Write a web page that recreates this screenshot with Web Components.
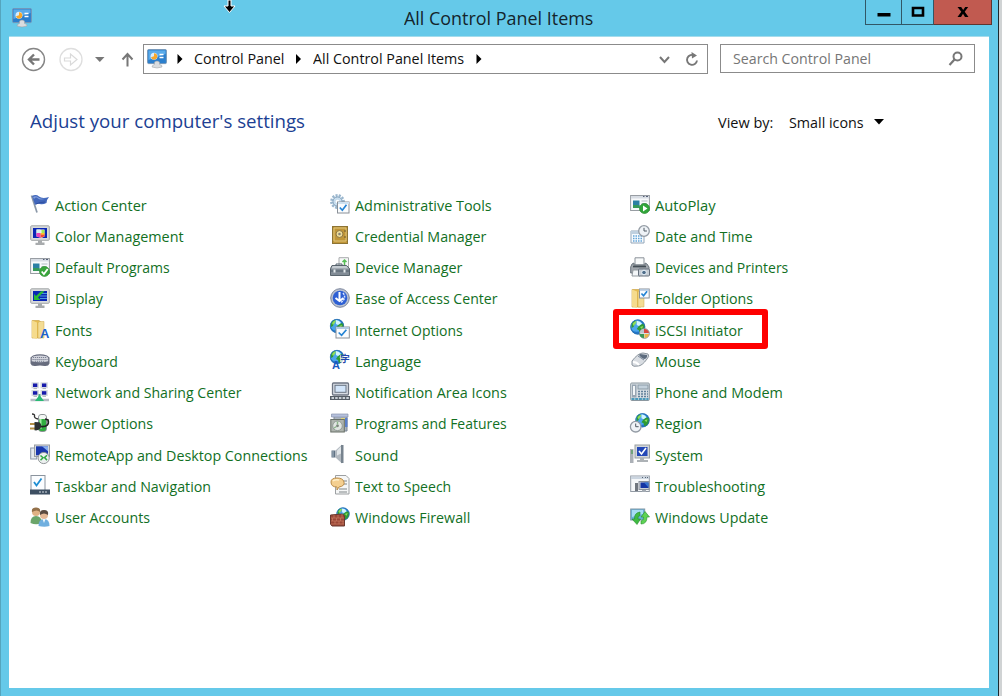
<!DOCTYPE html>
<html lang="en">
<head>
<meta charset="utf-8">
<title>All Control Panel Items</title>
<style>
html,body{margin:0;height:100%;overflow:hidden;background:#d0d3d4;font-family:"Open Sans","Noto Sans",sans-serif;color:#111}
</style>
</head>
<body>
<control-window></control-window>
<script>
// Shared drawing pieces for the 20x20 icon set.
const globe=(x,y,r)=>`<g transform="translate(${x} ${y}) scale(${r/7})"><circle r="7" fill="#2377c9"/><circle cx="-1" cy="-1" r="5.6" fill="#4ba6ec"/><path d="M-6-2Q-5-6-2-6L-3-3-4 0-6 1ZM1-1 4-3 6.600-2Q7 3 4 5.500L2 6 1 3-1 2Z" fill="#2f9b35"/><path d="M-5-3Q-3-6-1-5.600L-2-3-4-1ZM2 0 5-1 4 2Z" fill="#8fdc5c"/><path d="M-1-6 2-5 4-3 1-1-1-2Z" fill="#d3f6ff"/><circle r="6.700" fill="none" stroke="#2a6fab" stroke-width=".7"/></g>`;
const paper=(x,y,w,h)=>`<rect x="${x}" y="${y}" width="${w}" height="${h}" fill="#fafcfe" stroke="#8a9097"/><path d="M${x+w*.2} ${y+h*.5}l${w*.22} ${h*.25} ${w*.36} ${-h*.5}" fill="none" stroke="#2584d4" stroke-width="1.700"/>`;
const monitor=(inner)=>`<rect x=".7" y=".8" width="18.600" height="14.500" rx="1" fill="#d8dadb" stroke="#a2a5a7"/><rect x="3" y="3" width="14" height="10" fill="#0925b5"/>${inner}<path d="M8 15.500h4v2h2.500V20h-9v-2.300H8Z" fill="#a8abad"/>`;
const app=`<rect x=".6" y="1.500" width="18.800" height="15" fill="#f8fafb" stroke="#989da3"/><path d="M1 2h18v2.500H1Z" fill="#d8dde4"/><path d="M13 2.500h1.500M16 2.500h2" stroke="#566078"/><rect x="3" y="6.500" width="6.500" height="7.500" fill="#2b80a4"/><path d="M3 11h6.500v3H3Z" fill="#35995a"/><path d="M11.500 7h6M11.500 9.500h5M11.500 12h4" stroke="#b3bcc5"/>`;
const folder=`<path d="M2 1.500h7l2 1.500v16H2Z" fill="#e5bc51" stroke="#c69c3a" stroke-width=".6"/><path d="M2 1.500 7 3.500V20l-5-1.500Z" fill="#f5db8d"/><path d="M9 2.500h5V19H8V4Z" fill="#f3dc94" stroke="#cfa94f" stroke-width=".5"/>`;
const clock=(x,y,r)=>`<circle cx="${x}" cy="${y}" r="${r}" fill="#eff3f7" stroke="#939ba4" stroke-width="1.300"/><path d="M${x} ${y-r*.6}V${y}h${r*.55}" fill="none" stroke="#4e5862"/>`;
const cpanel=`<rect x=".6" y=".6" width="18.800" height="14" rx="1" fill="#2b7fcd" stroke="#7597b8"/><path d="M1.500 1.500h17V5l-17 6Z" fill="#5aabea"/><circle cx="7" cy="7.300" r="3.500" fill="#d9edfb"/><path d="M7 7.300V4.200a3.200 3.200 0 1 1-3 4.100Z" fill="#f7a72b"/><path d="M12.500 5.500h4M12.500 8.500h4" stroke="#fff" stroke-width="1.400"/><path d="M7.500 13q2.500-2 5 0v2.500q3 .5 2.500 2.500-5 2-10 0 0-2 2.500-2.500Z" fill="#d9dcdf" stroke="#999da1" stroke-width=".5"/>`;
const ICONS={
cpanel,
flag:`<path d="M1.500 1.500 7 18.500" stroke="#8b98a8" stroke-width="1.700"/><path d="M2 2q4-2 7 .5t10 .5q-2 2-2.500 6-4 2-6.500 1T5 11Z" fill="#4267bb"/><path d="M3 3q3-1.500 5.500.5T16 4.500q-6 2-8 0T4 5Z" fill="#829fdc"/><path d="M6 10q4-2 9-2" stroke="#2e4e9f" fill="none"/>`,
color:monitor(`<path d="M6.500 4.500h8v7l-3 1.500-5-1.500Z" fill="#f6f6e4"/><path d="M6.500 4.500h4v4h-4Z" fill="#d6eff0"/><path d="M6.500 8h4v4.800l-4-1.300Z" fill="#e943b9"/><path d="M10.500 8.500h4v3l-4 1.300Z" fill="#f04a3a"/><path d="M11.500 5h3v3l-3 1Z" fill="#a5ea52"/><path d="M11 8h3.500v1.700H11Z" fill="#ffc02b"/>`),
defaults:app+`<circle cx="14.500" cy="14.500" r="5" fill="#39a63c" stroke="#248827" stroke-width=".6"/><path d="m11.700 14.500 2.200 2.500 3.800-5" fill="none" stroke="#fff" stroke-width="1.800"/>`,
display:monitor(`<path d="M10 5.500h7M10 8h7M10 10.500h7" stroke="#4a9bdb"/><path d="M14.500 3.300 8 9.500l2.500 2.500H4V6l2 2 5-4.700Z" fill="#2bbb35"/>`),
fonts:folder+`<text x="10" y="19" font-family="Liberation Sans,sans-serif" font-size="13" font-weight="700" fill="#1b63cf">A</text>`,
keyboard:`<path d="M3 5.500Q10 3 17 5.500l2.500 2v6q-1 3-5 2.500-4.500-.8-9 0-4 .5-5-2.500v-6Z" fill="#676c7e"/><path d="M3.500 6.300q6.500-1.800 13 0l1.700 1.500v3.500q-8 2-16.500 0V7.800Z" fill="#d3d5dd"/><path d="M3 7.500h14M2.500 9.500h15M5 11.300h10" stroke="#7b8193" stroke-width="1" stroke-dasharray="1.200 .8"/>`,
network:`${[[1.500,.3],[10.500,.3],[1.500,8],[10.500,8]].map(([x,y])=>`<rect x="${x}" y="${y}" width="7.300" height="6" fill="#d5d9df"/><rect x="${x+1.500}" y="${y+1.200}" width="4.300" height="3.500" fill="#171bac"/><path d="M${x+2} ${y+6.300}h3.500" stroke="#a9aeb5"/>`).join('')}<path d="M9.500 12v5" stroke="#55aa88" stroke-width="2"/><path d="M.5 18H19" stroke="#b4bcc4" stroke-width="2.500"/><path d="m9.500 13 4.500 6H5Z" fill="#28ba74"/>`,
power:`<rect x="8" y="1" width="9" height="18" rx="4" fill="#8b9194"/><rect x="9" y="2" width="7" height="5" rx="2" fill="#f3f7f4"/><rect x="9" y="6" width="7" height="12" rx="2" fill="#31ad40"/><path d="M10.500 6v10" stroke="#a3eda2" stroke-width="2"/><path d="M2 1q3 0 2.500 2T8 6" fill="none" stroke="#333" stroke-width="1.400"/><path d="M0 11h5M0 15.500h5" stroke="#b49147" stroke-width="1.800"/><path d="m4.500 9 5 .3q3 2.700 1 6-2 2.700-6 2Z" fill="#2d3131"/><path d="M11 13.500q9 .5 7-6.500l-3-1" fill="none" stroke="#222" stroke-width="1.700"/>`,
remote:`<rect x=".7" y="4" width="6" height="11" fill="#e5ebf0" stroke="#8b98aa"/><rect x="4.500" y="1" width="15" height="11.500" fill="#d6dbe0" stroke="#979ca1"/><rect x="6" y="2.300" width="12" height="9" fill="#1937ac"/><path d="M12 2.300h6v5Z" fill="#88aff0"/><circle cx="13.700" cy="14" r="5.600" fill="#edf0f0" stroke="#929899"/><path d="m10.500 11.500 2.500 2.300-2.500 2.500M17 11.300l-2.500 2.300 2.500 2.500" fill="none" stroke="#32a846" stroke-width="1.500"/>`,
taskbar:`<rect x="1" y=".5" width="14" height="15" fill="#fbfdff" stroke="#8b949e"/><path d="m4 7 2.500 3.500 5-7" fill="none" stroke="#1e8ed2" stroke-width="1.800"/><rect y="14.500" width="20" height="5" fill="#3d4f62"/><path d="M9 17h2m1 0h2m1 0h2" stroke="#a3adb8" stroke-width="1.500"/>`,
users:`<circle cx="6" cy="5" r="4" fill="#e0b284"/><path d="M2 5Q1 .5 6 .5T10 5Q7 2 2 5" fill="#94714a"/><path d="M.5 16q0-7 5.500-7t6 7q-6 2.500-11.500 0" fill="#6ba56a"/><circle cx="14" cy="8" r="4" fill="#e5b996"/><path d="M10 8Q9 3 14 3t4 5q-4-3-8 0" fill="#5b4b40"/><path d="M8.500 19q0-7 5.500-7t5.500 7q-5 1.500-11 0" fill="#70afdf"/><path d="m12.500 12 1.500 4 1.500-4" fill="#eef7fd"/>`,
admin:`<circle cx="7.500" cy="7.500" r="6" fill="#e2eef8" stroke="#9ab6cd" stroke-width="2.800" stroke-dasharray="2 1.200"/><circle cx="7.500" cy="7.500" r="4.500" fill="#c9deee" stroke="#8aa7c0"/><circle cx="7.500" cy="7.500" r="1.800" fill="#fff"/>`+paper(7.5,8,11.5,11)+`<path d="M8 9h11" stroke="#cfe2f1" stroke-width="2"/>`,
credential:`<rect x="2.500" y="1.500" width="15" height="17" fill="#c09638" stroke="#8d7434"/><path d="M4 3h12v13H4Z" fill="none" stroke="#dfc57c"/><circle cx="9.500" cy="9" r="3.500" fill="#ecdc9a" stroke="#8e7742"/><circle cx="9.500" cy="9" r="1.300" fill="#85837a"/><path d="M15 5v2m0 4v2" stroke="#6b582d"/>`,
device:`<path d="M9 .7h9.500V11H9Z" fill="#f7f8f8" stroke="#a8abad"/><path d="M14.500 2.500v6M12.500 5l2-2 2 2" stroke="#58be58" fill="none" stroke-width="1.500"/><path d="M2 8.500h14.500l3 3v7H.5v-7Z" fill="#818b95" stroke="#59646d"/><path d="M2.500 9h14l2 2.500H1.500Z" fill="#c5ccd2"/><path d="M6 9V7h6v2M1 14h18" fill="none" stroke="#52606c"/><path d="M4.500 12.500v3m10-3v3" stroke="#e6ebee" stroke-width="2"/>`,
ease:`<circle cx="10" cy="10" r="9.300" fill="#b9c1d0" stroke="#7d879d"/><circle cx="10" cy="10" r="7.300" fill="#2e60d4"/><path d="M9.500 4v8m-4-2 4 3 4-3" fill="none" stroke="#fff" stroke-width="2"/><path d="M13 5q4 5-2 9.500" fill="none" stroke="#d9e5ff" stroke-width="1.500" stroke-dasharray="2 1"/>`,
internet:globe(7,7,7)+paper(6,8,13.3,11)+`<path d="M6 9h13" stroke="#b3cbe3" stroke-width="2"/>`,
language:globe(7,7,7)+`<path d="M10 5h9v7h-9Z" fill="#fff" opacity=".7"/><text x="10.300" y="12" font-family="Noto Sans CJK JP,sans-serif" font-size="9.500" font-weight="700" fill="#2348ad">字</text><text x="2" y="18.800" font-family="Liberation Sans,sans-serif" font-size="11" font-weight="700" fill="#1959c2">A</text>`,
notify:`<rect x="2.500" y="1" width="16" height="12" rx="1" fill="#d8dde5" stroke="#6e7684" stroke-width="1.300"/><rect x="5" y="3.300" width="11" height="7" fill="#d2e5fa" stroke="#697483"/><rect y="14" width="20" height="4" fill="#545c66"/><path d="M1.500 16h18" stroke="#c8cfd6" stroke-width="2" stroke-dasharray="2.500 1.200"/>`,
programs:`<path d="M4 3h13v15H4Z" fill="#aab3bd" stroke="#7a8592"/><path d="M1.500 1h16.500v3H1.500Z" fill="#b5c0dc" stroke="#8792ac" stroke-width=".7"/><path d="M14 5h3.500v9H14Z" fill="#5a7fc9"/><path d="M11 5h4v9h-4Z" fill="#e0d47a"/><rect x=".8" y="6.500" width="13.500" height="12.500" fill="#aeb4ae" stroke="#687068"/><circle cx="7.500" cy="12.800" r="4.800" fill="#e0e5e1" stroke="#929a96"/><path d="M7.500 8.500v3M4 15l2.500-1.500" stroke="#8ab888" stroke-width="1.400"/><circle cx="7.500" cy="12.800" r="1.400" fill="#7c857e"/>`,
sound:`<path d="M1.500 6.500h4v7h-4Z" fill="#607284"/><path d="M5.500 6.500 12 .5v19l-6.500-6Z" fill="#b2b9c0"/><path d="M11 1h2.500v18H11Z" fill="#77838e"/><path d="m7 6.500 4-4v7l-4 2Z" fill="#e1e6e9"/><path d="M3 7v6" stroke="#a9b8c5"/>`,
speech:`<path d="M5.500.5H16l3 3V19H5.500Z" fill="#f6f7f7" stroke="#9da0a2"/><path d="M13 6h4M14 9h3M9 14h8m-8 3h8" stroke="#7e8587"/><path d="M1 7q0-4 6-4t7 4-5 5L7 15v-3Q1 12 1 7" fill="#f4cf90" stroke="#ba8c48"/><path d="M3 6q2-2 6-1" fill="none" stroke="#fff0cb" stroke-width="1.500"/>`,
firewall:globe(13,7,6.5)+`<path d="m.5 8 12-1 2 2v10H2l-1.500-2Z" fill="#9b4737" stroke="#69382e"/><path d="M1 11h13M1 14h13M1 17h13M4 8v3m4-3v3m4-4v4M2.500 11v3m4-3v3m4-3v3M5 14v3m4-3v3m4-3v3" stroke="#c77b63" stroke-width=".7"/>`,
autoplay:app+`<circle cx="14.500" cy="14.500" r="5" fill="#31a63a" stroke="#23862a" stroke-width=".7"/><path d="m13 11.500 4.500 3-4.500 3Z" fill="#fff"/>`,
date:`<path d="M1 6h13v12H1Z" fill="#f7fbff" stroke="#94a6b8"/><path d="M1 6h13v3H1Z" fill="#bfd0df"/><path d="M3 11h9M3 13.500h9M3 16h9" stroke="#64a5d7" stroke-width="1.300" stroke-dasharray="1.500 1"/>`+clock(14,6,5.3),
printer:`<path d="M5 .8h9V8H5Z" fill="#f8fafa" stroke="#8b9299"/><path d="m2 7 2-1v2h11V6l2 1 2 3v6H.7v-6Z" fill="#a0a6ac" stroke="#6c767e"/><path d="M3 9.500h13" stroke="#434d55" stroke-width="1.700"/><path d="M3 13h8l-1 6H2Z" fill="#f4f7f9" stroke="#92999e"/><rect x="8.500" y="12" width="11" height="7" rx="1" fill="#c5ccd4" stroke="#66707c"/><circle cx="14" cy="15.500" r="2.300" fill="#4f6e8b" stroke="#edf5fb"/>`,
folderopt:folder+paper(9.5,1,9.7,9)+`<path d="M9.500 2h9.500" stroke="#afc6de" stroke-width="1.500"/>`,
iscsi:globe(7.8,8,7.4)+`<circle cx="14.500" cy="14.500" r="4.800" fill="#d8dde0" stroke="#858e94"/><path d="M14 14v-4a4.500 4.500 0 0 1 5 4Z" fill="#d84842"/><path d="M14.500 15h4.500a4.500 4.500 0 0 1-4.500 4Z" fill="#e9b54a"/><path d="M14 15v4a4.500 4.500 0 0 1-4.500-4Z" fill="#3a9856"/><path d="M9.700 14a4.500 4.500 0 0 1 4.300-4v4Z" fill="#b9c6cf"/>`,
mouse:`<path d="M2 11Q8 3 13 3l5 1q2 2-1 5-5 7-9 7-5 1-6-1Z" fill="#d9dde2" stroke="#8d969f"/><path d="m10 4 7 1q1 2-2 4-3 0-6-4Z" fill="#5d6c7e"/><path d="m8 6 6 4" stroke="#79889a"/><path d="M3 12q4 0 6 3" stroke="#fff" stroke-width="2" fill="none"/>`,
phone:`<rect x=".7" y="1" width="18.600" height="17.500" rx="1" fill="#d9e0e5" stroke="#8b979f"/><path d="M2 2.500h4.500v13H2Z" fill="#98a6b3"/><path d="M3 4h2v9H3Z" fill="#f3f7f9"/><rect x="8" y="3" width="10" height="4" fill="#c3d1dc" stroke="#8b9ba7"/><path d="M8 9.500h10M8 12h10M8 14.500h10" stroke="#62809a" stroke-width="1.300" stroke-dasharray="2 1"/><path d="M1.500 17h17" stroke="#4b9abb" stroke-width="1.800" stroke-dasharray="3 .7"/>`,
region:globe(12.5,7.3,7)+clock(5.7,13.7,5.3),
system:`<path d="M0 5h3.500v14H0Z" fill="#acb1b7"/><path d="M1 7h2M1 9h2" stroke="#36953f"/><rect x="5" y="1" width="14.500" height="13" fill="#d3d7da" stroke="#9a9fa2"/><rect x="7" y="3" width="10.500" height="9" fill="#2347b7"/><path d="m9 7 2.500 3 4.500-6" fill="none" stroke="#fff" stroke-width="1.600"/><path d="M10 14h4v2h4v2H7v-2h3Z" fill="#adb2b6"/>`,
trouble:`<rect x=".7" y="1" width="18.600" height="15.500" fill="#f5f7f9" stroke="#9199a3"/><path d="M1 1.500h18V4H1Z" fill="#cbd5e0"/><path d="M12 2.500h1m2 0h1m1 0h1" stroke="#586675"/><rect x="5" y="8" width="3" height="8" fill="#70767e"/><rect x="9" y="6.500" width="10" height="8" fill="#ccd1d8" stroke="#8a909b"/><rect x="10.500" y="7.500" width="8" height="5.500" fill="#1534a4"/><path d="m14 7.500 4.500 0v5" fill="#3673d0"/><path d="M12 15h4v2h-4" fill="#a3aab2"/>`,
update:`<rect x=".7" y="2" width="14" height="11" fill="#67b2da" stroke="#8197a6"/><path d="M2 3h11v4L2 10Z" fill="#a7dcf4"/><path d="M4.500 12Q4 6 10 5v3.500Q7.500 9 8 12h2.500L7 17.500 2 12Z" fill="#3fbb42" stroke="#238c2b" stroke-width=".6"/><path d="M17 10q0 7-6 7v-3q3-.5 2.500-4H11l4-5.500L19.500 10Z" fill="#5ed353" stroke="#248e2c" stroke-width=".6"/>`
};
class UiText extends HTMLElement{
 connectedCallback(){
  const w=this.getAttribute('w'),s=this.getAttribute('size')||14.5;
  this.attachShadow({mode:'open'}).innerHTML=`<style>:host{display:block;flex:none;width:${w}px;white-space:nowrap;line-height:1.4;font-size:${s}px}span{display:inline-block;transform-origin:0 50%}</style><span><slot></slot></span>`;
  const span=this.shadowRoot.querySelector('span');
  span.style.transform=`scaleX(${w/span.offsetWidth})`;
 }}
class PanelIcon extends HTMLElement{
 connectedCallback(){this.attachShadow({mode:'open'}).innerHTML=`<style>:host{display:block;flex:none;width:var(--s,20px);height:var(--s,20px)}svg{display:block;width:100%;height:100%;overflow:visible}</style><svg viewBox="0 0 20 20">${ICONS[this.getAttribute('name')]}</svg>`}}
class PanelItem extends HTMLElement{
 connectedCallback(){this.attachShadow({mode:'open'}).innerHTML=`<style>:host{display:flex;align-items:center;height:31.25px;position:relative;color:#12701f}panel-icon{margin:-2px 5px 0 0}ui-text{padding-top:1.400px}
 :host([marked])::after{content:"";position:absolute;left:-17.500px;top:-5.500px;width:143px;height:28px;border:6px solid #fe0000;border-radius:3px}</style>
 <panel-icon name="${this.getAttribute('icon')}"></panel-icon><ui-text w="${this.getAttribute('w')}"><slot></slot></ui-text>`}}
class TitleBar extends HTMLElement{
 connectedCallback(){this.attachShadow({mode:'open'}).innerHTML=`<style>:host{display:grid;grid-template-columns:392px 1fr auto;height:36px;padding-left:11px;box-sizing:border-box}
 panel-icon{margin-top:7.500px}ui-text{margin-top:4.500px;color:#14252c}
 .b{display:flex;margin-right:6px}.b div{box-sizing:border-box;height:25px;border:1px solid #315766;border-top:0;border-left-width:1px;display:grid;place-items:center}
 .b div+div{border-left:0}.b svg{display:block}.m{width:37px}.r{width:32px}.c{width:58px;background:#c15a50;border-color:#60352f!important}
 .cur{position:absolute;left:222px;top:0}</style>
 <panel-icon name="cpanel"></panel-icon><ui-text w="189" size="18.700">All Control Panel Items</ui-text>
 <div class="b"><div class="m"><svg width="14" height="24"><path d="M.5 13h13v3.500H.5Z"/></svg></div><div class="r"><svg width="14" height="24"><path d="M2 8h10v7.500H2Z" fill="none" stroke="#000" stroke-width="2.600"/></svg></div><div class="c"><svg width="14" height="24"><path d="M1.500 7h3.700l2 3 2-3h3l-3.500 4.700L12.500 17H9l-2-3.200L5 17H1.500l3.800-5.300Z"/></svg></div></div>
 <svg class="cur" width="13" height="14"><path d="M5 0h3v6h4l-5.500 6.500L1 6h4Z" fill="#000" stroke="#fff" stroke-width="1"/></svg>`}}
class NavBar extends HTMLElement{
 connectedCallback(){this.attachShadow({mode:'open'}).innerHTML=`<style>:host{display:flex;align-items:flex-start;padding:7px 14px 0 12px;height:43px;box-sizing:border-box}
 svg{display:block;flex:none}.n{width:122px;height:30px}.a{box-sizing:border-box;display:flex;align-items:center;width:565px;height:30px;border:1px solid #8b8b8b;margin-right:12px;padding:0 7px 0 3px}
 .a panel-icon{margin:0}.s{box-sizing:border-box;display:flex;align-items:center;justify-content:space-between;width:255px;height:29px;border:1px solid #8b8b8b;padding:0 10px 0 12px;color:#767676}.s ui-text{padding-top:2px}.sp{flex:1}</style>
 <svg class="n" viewBox="0 0 122 30"><g fill="none"><circle cx="12.500" cy="15.500" r="11" stroke="#868686" stroke-width="1.400"/><path d="M18.500 15.500H8m5-5-5 5 5 5" stroke="#777" stroke-width="2.400"/><circle cx="50" cy="15.500" r="11" stroke="#dedede" stroke-width="1.300"/><path d="M43.500 14h6v-4l6.500 5.500-6.500 5.500v-4h-6Z" stroke="#dadada" stroke-width="1.200"/><path d="M106.500 22.500V10m-5 5.500 5-5.500 5 5.500" stroke="#777" stroke-width="2"/></g><path d="M74 13h9.500l-4.700 5Z" fill="#777"/></svg>
 <div class="a"><panel-icon name="cpanel"></panel-icon><svg width="27" height="14"><path d="m10.500 2 5 5-5 5Z"/></svg><ui-text w="90">Control Panel</ui-text><svg width="29" height="14"><path d="m12 2 5 5-5 5Z"/></svg><ui-text w="151">All Control Panel Items</ui-text><svg width="22" height="14"><path d="m12.500 2 5 5-5 5Z"/></svg><span class="sp"></span>
 <svg width="15" height="14"><path d="m3 5 4.500 5L12 5" fill="none" stroke="#777" stroke-width="2"/></svg><svg style="margin-left:12px" width="16" height="18"><path d="M10.500 5.500a5 5 0 1 0 2.500 5" fill="none" stroke="#777" stroke-width="1.900"/><path d="m7.500 2 5.500 3.500-5 3Z" fill="#777"/></svg></div>
 <div class="s"><ui-text w="138">Search Control Panel</ui-text><svg width="18" height="18"><circle cx="11.500" cy="6.500" r="4" fill="none" stroke="#777" stroke-width="2"/><path d="m8.500 9.500-5 5.500" stroke="#777" stroke-width="2.200"/></svg></div>`}}
const COLS=[
[['flag','Action Center',92],['color','Color Management',129],['defaults','Default Programs',115],['display','Display',48],['fonts','Fonts',37],['keyboard','Keyboard',63],['network','Network and Sharing Center',187],['power','Power Options',98],['remote','RemoteApp and Desktop Connections',253],['taskbar','Taskbar and Navigation',156],['users','User Accounts',95]],
[['admin','Administrative Tools',137],['credential','Credential Manager',131],['device','Device Manager',107],['ease','Ease of Access Center',143],['internet','Internet Options',108],['language','Language',66],['notify','Notification Area Icons',152],['programs','Programs and Features',152],['sound','Sound',43],['speech','Text to Speech',96],['firewall','Windows Firewall',115]],
[['autoplay','AutoPlay',61],['date','Date and Time',97],['printer','Devices and Printers',133],['folderopt','Folder Options',98],['iscsi','iSCSI Initiator',88],['mouse','Mouse',46],['phone','Phone and Modem',128],['region','Region',47],['system','System',48],['trouble','Troubleshooting',110],['update','Windows Update',113]]];
class ControlWindow extends HTMLElement{
 connectedCallback(){this.attachShadow({mode:'open'}).innerHTML=`<style>:host{display:flex;flex-direction:column;box-sizing:border-box;width:999px;height:696px;background:#65c9e9;border-left:1px solid #55a5be;border-right:1px solid #1c2a30;position:relative}
 main{margin:0 9px 8px 8px;flex:1;background:#fff;border-top:1px solid #a4dcec;box-sizing:border-box}
 header{display:flex;align-items:flex-start;padding:28px 0 0 21px;height:109px;box-sizing:border-box}
 h1{margin:0;font-weight:400;color:#203f93;width:688px}.v{display:flex;align-items:center;gap:16px;margin-top:5px}.v svg{margin-left:-6px}
 section{display:grid;grid-template-columns:300px 300px 300px;padding:.5px 0 0 21px}</style>
 <title-bar></title-bar><main><nav-bar></nav-bar><header><h1><ui-text w="275" size="19">Adjust your computer's settings</ui-text></h1><div class="v"><ui-text w="55">View by:</ui-text><ui-text w="75">Small icons</ui-text><svg width="11" height="8"><path d="M0 0h10L5 5.500Z"/></svg></div></header>
 <section>${COLS.map(c=>`<div>${c.map(([i,t,w])=>`<panel-item icon="${i}" w="${w}"${i==='iscsi'?' marked':''}>${t}</panel-item>`).join('')}</div>`).join('')}</section></main>`}}
customElements.define('ui-text',UiText);
customElements.define('panel-icon',PanelIcon);
customElements.define('panel-item',PanelItem);
customElements.define('title-bar',TitleBar);
customElements.define('nav-bar',NavBar);
customElements.define('control-window',ControlWindow);
</script>
</body>
</html>
